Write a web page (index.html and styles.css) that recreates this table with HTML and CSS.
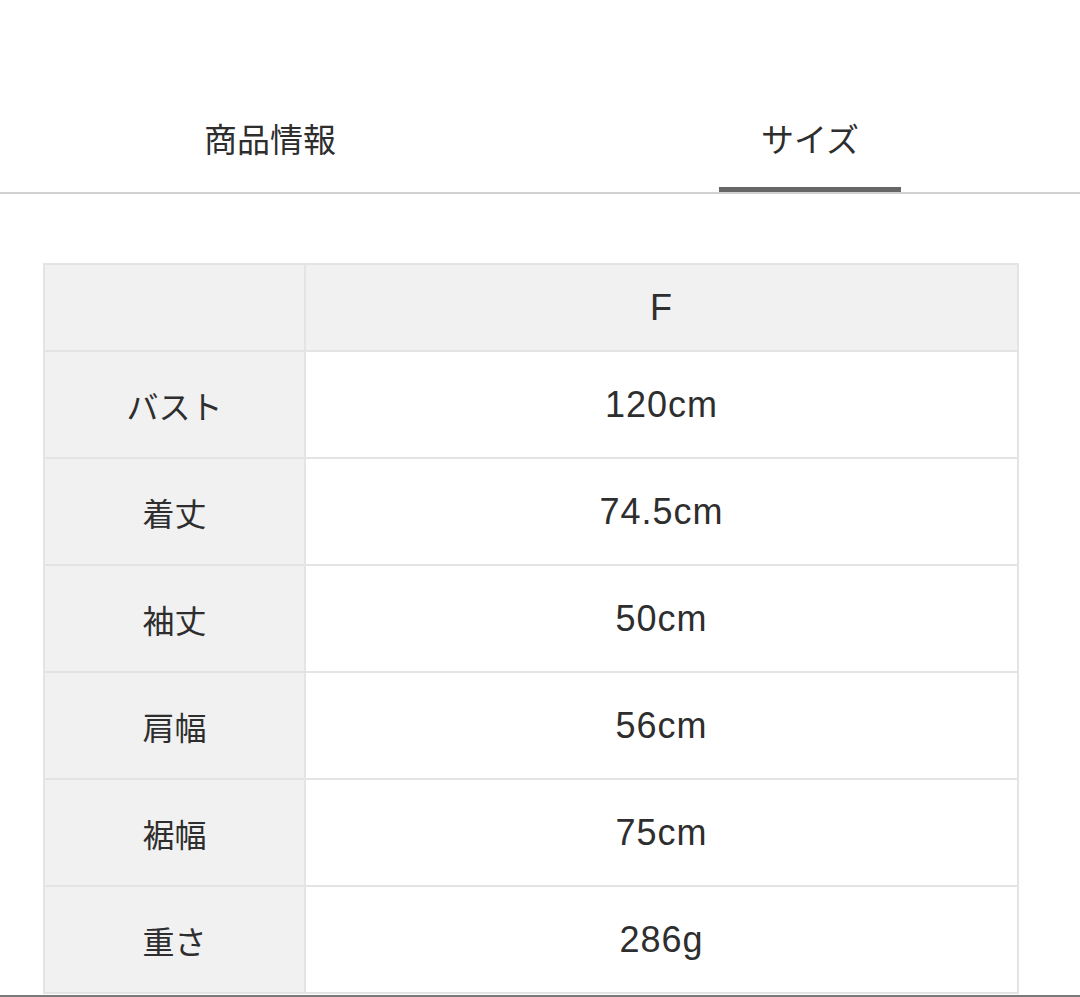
FILE: index.html
```html
<!DOCTYPE html>
<html lang="ja">
<head>
<meta charset="utf-8">
<title>サイズ</title>
<link rel="stylesheet" href="styles.css">
</head>
<body>
<nav class="tabs">
  <div class="tab"><span class="tab-label">商品情報</span></div>
  <div class="tab tab-active"><span class="tab-label">サイズ</span><span class="tab-bar"></span></div>
</nav>
<table class="size-table">
  <thead>
    <tr class="head-row"><th class="label"></th><th class="value">F</th></tr>
  </thead>
  <tbody>
    <tr><th class="label">バスト</th><td class="value">120cm</td></tr>
    <tr><th class="label">着丈</th><td class="value">74.5cm</td></tr>
    <tr><th class="label">袖丈</th><td class="value">50cm</td></tr>
    <tr><th class="label">肩幅</th><td class="value">56cm</td></tr>
    <tr><th class="label">裾幅</th><td class="value">75cm</td></tr>
    <tr><th class="label">重さ</th><td class="value">286g</td></tr>
  </tbody>
</table>
<div class="bottom-rule"></div>
</body>
</html>
```
FILE: styles.css
```css
html, body {
  margin: 0;
  padding: 0;
  background: #ffffff;
}
body {
  width: 1080px;
  height: 997px;
  overflow: hidden;
  font-family: "Liberation Sans", "Noto Sans CJK JP", sans-serif;
  color: #333333;
}
.tabs {
  display: flex;
  border-bottom: 2px solid #d0d0d0;
}
.tab {
  flex: 1;
  display: flex;
  flex-direction: column;
  align-items: center;
  padding-top: 118px;
  padding-bottom: 34px;
}
.tab-active {
  padding-bottom: 0;
}
.tab-label {
  font-family: "Noto Sans CJK JP", sans-serif;
  font-size: 33px;
  line-height: 40px;
  color: #2e2e2e;
}
.tab-bar {
  display: block;
  width: 182px;
  height: 5px;
  margin-top: 29px;
  background: #666666;
}
.size-table {
  margin: 69px 0 0 43px;
  width: 976px;
  border-collapse: collapse;
  table-layout: fixed;
}
.size-table th,
.size-table td {
  border: 2px solid #e4e4e4;
  text-align: center;
  vertical-align: middle;
  font-weight: normal;
  color: #2e2e2e;
  padding: 0;
}
.size-table .label {
  width: 259px;
  background: #f1f1f1;
  font-family: "Noto Sans CJK JP", sans-serif;
  font-size: 32px;
}
.size-table .value {
  background: #ffffff;
  font-family: "Liberation Sans", "Noto Sans CJK JP", sans-serif;
  font-size: 36px;
  letter-spacing: 1px;
}
.head-row th {
  height: 85px;
}
.head-row .value {
  background: #f1f1f1;
}
tbody tr th,
tbody tr td {
  height: 105px;
}
.bottom-rule {
  border-top: 2px solid #7a7a7a;
  margin-top: 1px;
}
```
